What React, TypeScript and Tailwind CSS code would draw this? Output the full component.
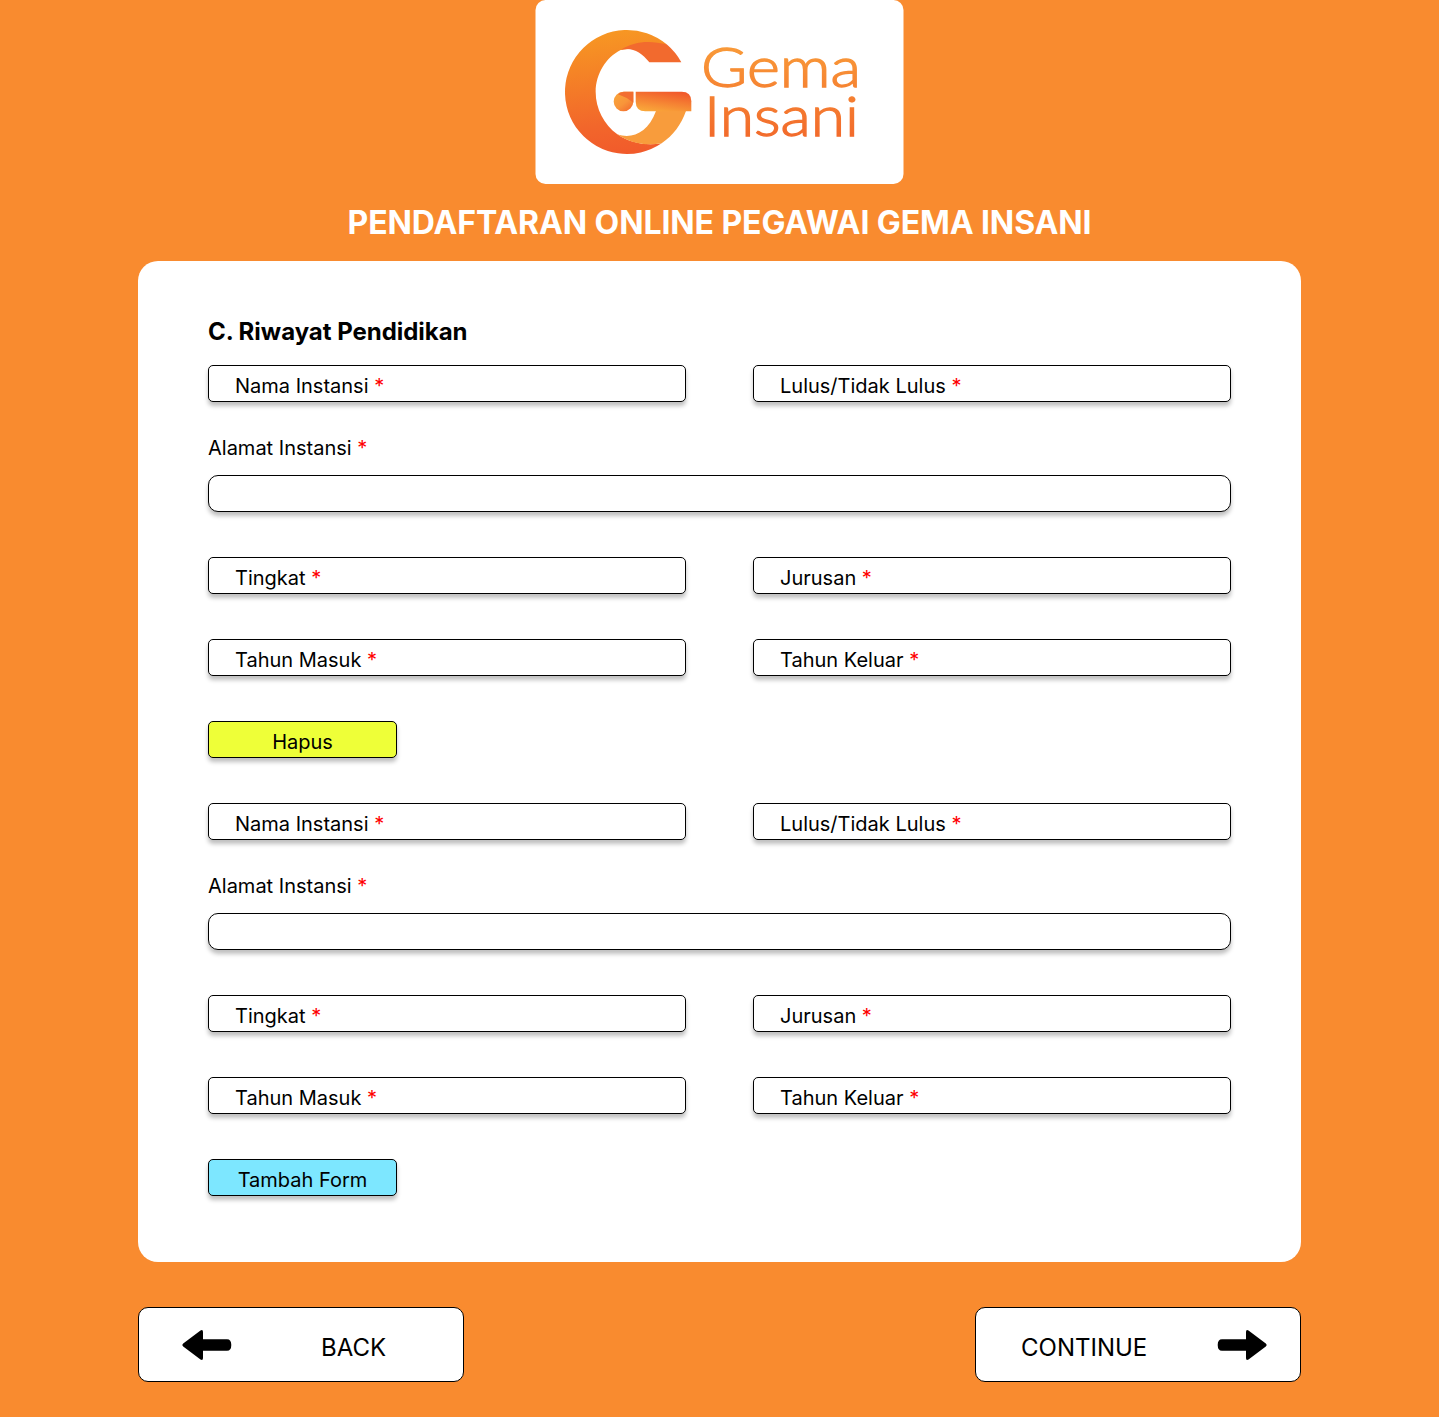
import type { ReactNode } from "react";

function Logo() {
  return (
    <svg viewBox="15 0 1107 552" className="block h-[184px] w-[369px]" role="img" aria-label="Gema Insani">
      <defs>
        <linearGradient id="ring" gradientUnits="userSpaceOnUse" x1="270" y1="90" x2="310" y2="462">
          <stop offset="0" stopColor="#f79723" />
          <stop offset="0.3" stopColor="#f58426" />
          <stop offset="0.75" stopColor="#f2662b" />
          <stop offset="1" stopColor="#f15a2b" />
        </linearGradient>
        <linearGradient id="bar" gradientUnits="userSpaceOnUse" x1="405" y1="272" x2="395" y2="338">
          <stop offset="0" stopColor="#f15a2b" />
          <stop offset="1" stopColor="#f9a63a" />
        </linearGradient>
        <linearGradient id="dot" gradientUnits="userSpaceOnUse" x1="262" y1="290" x2="295" y2="334">
          <stop offset="0" stopColor="#f9a03a" />
          <stop offset="0.5" stopColor="#f8953a" />
          <stop offset="1" stopColor="#f37030" />
        </linearGradient>
        <linearGradient id="word" gradientUnits="userSpaceOnUse" x1="0" y1="138" x2="0" y2="412">
          <stop offset="0" stopColor="#f99a38" />
          <stop offset="1" stopColor="#f26a2b" />
        </linearGradient>
      </defs>
      <rect x="16.5" y="0" width="1104" height="552" rx="30" fill="#fff" />
      <path
        fill="url(#ring)"
        d="M410 133A186 186 0 1 0 395 430C350 438 302 430 262 403C222 373 197 327 197 275C197 222 228 172 272 150Z"
      />
      <path fill="#f26a2e" d="M272 150C312 122 362 121 410 133Q438 157 454 187H358C334 156 304 140 272 150Z" />
      <path fill="#f89c3c" d="M262 403C306 418 354 399 378 333H468C453 374 431 405 395 430C350 438 302 431 262 403Z" />
      <path fill="url(#bar)" d="M317 275H455Q484 275 484 304V334H346Q317 334 317 304Z" />
      <path fill="url(#dot)" d="M280 275H310V305A29.500 29.500 0 1 1 280 275Z" />
      <path fill="#f26d30" d="M264 283Q271 275 282 275H310V308Q289 291 264 283Z" />
      <g
        fill="url(#word)"
        stroke="url(#word)"
        strokeWidth="4"
        fontFamily="Lato, sans-serif"
        fontWeight="300"
        fontSize="168"
      >
        <text x="513" y="262" textLength="480" lengthAdjust="spacingAndGlyphs">Gema</text>
        <text x="522" y="409" textLength="465" lengthAdjust="spacingAndGlyphs">Insani</text>
      </g>
    </svg>
  );
}

const Star = () => <span className="text-[#ff0000]">*</span>;

const boxStyle = "h-[37px] border border-black text-xl leading-[40px] shadow-[0_4px_4px_rgba(0,0,0,0.25)]";

function Field({ label }: { label: string }) {
  return (
    <div className={`${boxStyle} rounded-[5px] bg-white pl-[26px]`}>
      {label} <Star />
    </div>
  );
}

function Row({ children }: { children: ReactNode }) {
  return <div className="grid grid-cols-2 gap-[67px]">{children}</div>;
}

function EducationForm({ action, color }: { action: string; color: string }) {
  return (
    <section className="flex flex-col gap-[45px]">
      <Row>
        <Field label="Nama Instansi" />
        <Field label="Lulus/Tidak Lulus" />
      </Row>
      <div className="-mt-3">
        <div className="h-[40px] text-xl leading-[26px]">
          Alamat Instansi <Star />
        </div>
        <div className={`${boxStyle} rounded-[10px] bg-white`} />
      </div>
      <Row>
        <Field label="Tingkat" />
        <Field label="Jurusan" />
      </Row>
      <Row>
        <Field label="Tahun Masuk" />
        <Field label="Tahun Keluar" />
      </Row>
      <button className={`${boxStyle} ${color} w-[189px] rounded-[5px]`}>{action}</button>
    </section>
  );
}

function Arrow({ className }: { className: string }) {
  return (
    <svg viewBox="0 0 50 30" className={`h-[30px] w-[50px] shrink-0 ${className}`}>
      <path d="M1.200 13.500 18.500.5Q21 -.8 21 2V9.200H45Q49.300 9.200 49.300 15T45 20.800H21V28Q21 30.800 18.500 29.500L1.200 16.500Q-.4 15 1.200 13.500Z" />
    </svg>
  );
}

export default function App() {
  return (
    <main className="flex h-[1417px] w-[1439px] flex-col items-center bg-[#f98b2f] font-[Inter,sans-serif] text-black">
      <header className="flex flex-col items-center">
        <Logo />
        <h1 className="mt-[19px] h-[58px] text-[32px] leading-[40px] font-bold tracking-[-0.1px] whitespace-nowrap text-white">
          PENDAFTARAN ONLINE PEGAWAI GEMA INSANI
        </h1>
      </header>
      <div className="h-[1001px] w-[1163px] rounded-[20px] bg-white px-[70px] pt-[55px]">
        <h2 className="h-[49px] text-2xl leading-[32px] font-bold tracking-[-0.03px]">C. Riwayat Pendidikan</h2>
        <div className="flex flex-col gap-[45px]">
          <EducationForm action="Hapus" color="bg-[#eeff38]" />
          <EducationForm action="Tambah Form" color="bg-[#7de7ff]" />
        </div>
      </div>
      <nav className="mt-[45px] flex w-[1163px] justify-between text-2xl">
        <button className="flex h-[75px] w-[326px] items-center rounded-[10px] border border-black bg-white pl-[43px]">
          <Arrow className="" />
          <span className="ml-[89px] pt-1.5">BACK</span>
        </button>
        <button className="flex h-[75px] w-[326px] items-center justify-between rounded-[10px] border border-black bg-white pr-[33px] pl-[45px]">
          <span className="pt-1.5">CONTINUE</span>
          <Arrow className="rotate-180" />
        </button>
      </nav>
    </main>
  );
}
